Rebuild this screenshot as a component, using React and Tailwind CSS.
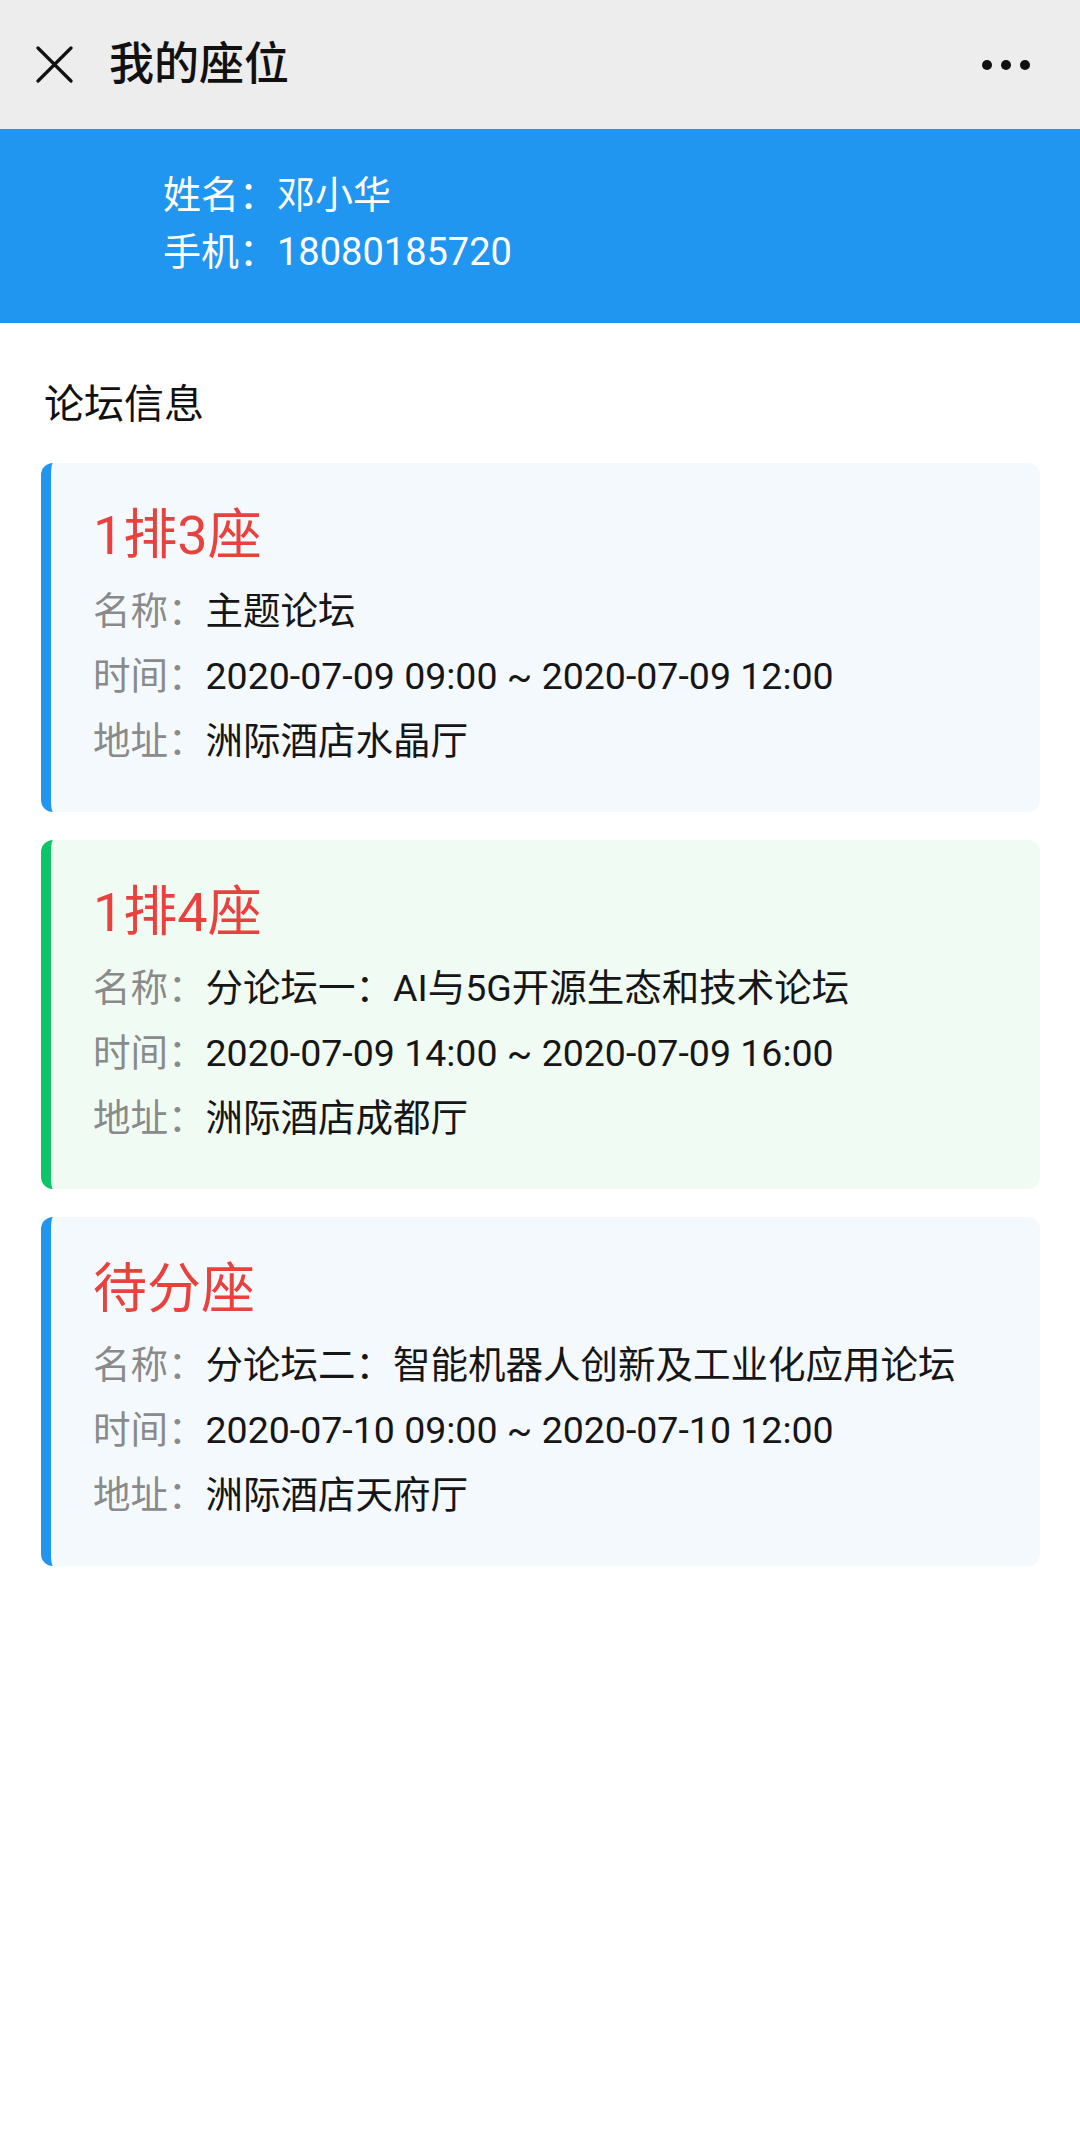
import React from "react";

const cards = [
  {
    seat: "1排3座",
    name: "主题论坛",
    time: "2020-07-09 09:00 ~ 2020-07-09 12:00",
    addr: "洲际酒店水晶厅",
    theme: "blue",
  },
  {
    seat: "1排4座",
    name: "分论坛一：AI与5G开源生态和技术论坛",
    time: "2020-07-09 14:00 ~ 2020-07-09 16:00",
    addr: "洲际酒店成都厅",
    theme: "green",
  },
  {
    seat: "待分座",
    name: "分论坛二：智能机器人创新及工业化应用论坛",
    time: "2020-07-10 09:00 ~ 2020-07-10 12:00",
    addr: "洲际酒店天府厅",
    theme: "blue",
  },
];

function Row({ label, value }) {
  return (
    <div className="flex leading-[65px] text-[37.5px]">
      <span className="text-[#8a8a8a]">{label}</span>
      <span className="text-[#161616]">{value}</span>
    </div>
  );
}

function Card({ c }) {
  const cls =
    c.theme === "green"
      ? "bg-[#f0fbf4] border-[#0cc469]"
      : "bg-[#f4f9fe] border-[#2196f0]";
  return (
    <div
      className={`${cls} border-l-[10px] rounded-[12px] h-[349px] pl-[42px] pt-[38px] box-border`}
    >
      <div className="text-[54px] leading-[70px] text-[#e8423f]">{c.seat}</div>
      <div className="mt-[8px]">
        <Row label="名称：" value={c.name} />
        <Row label="时间：" value={c.time} />
        <Row label="地址：" value={c.addr} />
      </div>
    </div>
  );
}

export default function App() {
  return (
    <div
      className="w-[1080px] min-h-[2155px] bg-white"
      style={{ fontFamily: 'Roboto, "Noto Sans CJK SC", sans-serif' }}
    >
      {/* Header */}
      <div className="h-[129px] bg-[#ededed] flex items-center pl-[36px] pr-[50px]">
        <svg width="37" height="37" viewBox="0 0 37 37" className="shrink-0">
          <path
            d="M2 2 L35 35 M35 2 L2 35"
            stroke="#111"
            strokeWidth="3.2"
            strokeLinecap="round"
          />
        </svg>
        <div className="ml-[36px] text-[45px] font-medium text-[#111] leading-none">
          我的座位
        </div>
        <div className="ml-auto flex items-center gap-[9px]">
          <span className="w-[10px] h-[10px] rounded-full bg-[#111]" />
          <span className="w-[10px] h-[10px] rounded-full bg-[#111]" />
          <span className="w-[10px] h-[10px] rounded-full bg-[#111]" />
        </div>
      </div>

      {/* Banner */}
      <div className="h-[194px] bg-[#2196f0] pl-[163px] pt-[38px] box-border text-white text-[38px] leading-[57px]">
        <div>姓名：邓小华</div>
        <div>手机：18080185720</div>
      </div>

      {/* Section title */}
      <div className="px-[44px] mt-[54px] text-[40px] leading-[56px] text-[#111]">
        论坛信息
      </div>

      {/* Cards */}
      <div className="mt-[30px] ml-[41px] mr-[40px] flex flex-col gap-[28px]">
        {cards.map((c, i) => (
          <Card key={i} c={c} />
        ))}
      </div>
    </div>
  );
}
